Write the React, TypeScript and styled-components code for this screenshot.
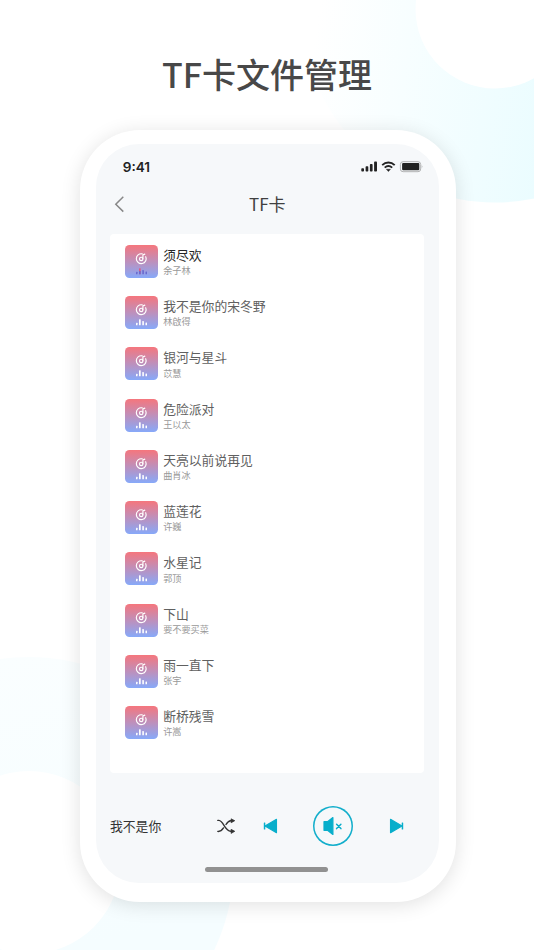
import React from "react";
import styled, { createGlobalStyle } from "styled-components";

const GlobalStyle = createGlobalStyle`
  * { box-sizing: border-box; }
  body {
    margin: 0;
    background: #fff;
    font-family: "Noto Sans CJK SC", sans-serif;
  }
`;

const Page = styled.main`
  position: relative;
  width: 534px;
  height: 950px;
  overflow: hidden;
  display: flex;
  flex-direction: column;
  align-items: center;
  background: #fff;
`;

const Backdrop = styled.svg`
  position: absolute;
  inset: 0;
  width: 534px;
  height: 950px;
`;

const Headline = styled.h1`
  position: relative;
  margin: 0;
  height: 129.5px;
  padding-top: 49px;
  font-size: 34px;
  line-height: 50px;
  font-weight: 500;
  color: #484848;
  white-space: nowrap;
`;

const Phone = styled.section`
  position: relative;
  width: 375.5px;
  height: 772.5px;
  margin-left: 1.5px;
  padding: 14.5px 17px 19px 16px;
  border-radius: 60px;
  background: #fff;
  box-shadow: 0 3px 20px rgba(0, 0, 0, 0.12);
`;

const Screen = styled.div`
  height: 739px;
  padding: 0 14px;
  border-radius: 43px;
  background: #f6f8fa;
  display: flex;
  flex-direction: column;
`;

const StatusBar = styled.div`
  height: 42px;
  padding: 3px 2px 0 12.7px;
  display: flex;
  align-items: center;
  justify-content: space-between;
`;

const Clock = styled.span`
  font: 600 13.6px/18px Inter, sans-serif;
  color: #222;
  transform: translateY(-0.5px);
`;

const NavBar = styled.header`
  height: 48px;
  padding: 0 3px 11.5px;
  display: grid;
  grid-template-columns: 14px 1fr 14px;
  align-items: center;
`;

const NavTitle = styled.h2`
  margin: 0;
  text-align: center;
  font-size: 17px;
  line-height: 24px;
  font-weight: 400;
  color: #404040;
`;

const SongList = styled.ul`
  list-style: none;
  margin: 0;
  width: 314px;
  height: 538.5px;
  padding: 10.8px 15px 0;
  border-radius: 4px;
  background: #fff;
`;

const SongRow = styled.li`
  height: 51.25px;
  display: flex;
  gap: 5.2px;
`;

const SongText = styled.div`
  display: flex;
  flex-direction: column;
`;

const SongTitle = styled.span<{ $active: boolean }>`
  font-size: 12.8px;
  line-height: 20.4px;
  color: ${(p) => (p.$active ? "#262626" : "#606060")};
`;

const Artist = styled.span`
  font-size: 9.15px;
  line-height: 11.6px;
  color: #989898;
`;

const Player = styled.footer`
  height: 107px;
  display: grid;
  grid-template-columns: 106px 46px 42px 85px 1fr;
  align-items: center;
`;

const NowPlaying = styled.span`
  padding-bottom: 1.5px;
  font-size: 12.8px;
  color: #333;
`;

const IconButton = styled.button`
  padding: 0;
  border: 0;
  background: none;
  display: flex;
  align-items: center;
  justify-content: flex-start;
`;

const MuteButton = styled(IconButton)`
  width: 40px;
  height: 40px;
  margin-left: 9px;
  justify-content: center;
  border-radius: 50%;
  box-shadow: inset 0 0 0 1.5px #12aecb;
`;

const HomeBar = styled.div`
  width: 122.5px;
  height: 5px;
  margin: -12.8px 0 0 95px;
  border-radius: 3px;
  background: #919191;
`;

const songs = [
  ["须尽欢", "余子林"],
  ["我不是你的宋冬野", "林啟得"],
  ["银河与星斗", "苡慧"],
  ["危险派对", "王以太"],
  ["天亮以前说再见", "曲肖冰"],
  ["蓝莲花", "许巍"],
  ["水星记", "郭顶"],
  ["下山", "要不要买菜"],
  ["雨一直下", "张宇"],
  ["断桥残雪", "许嵩"],
];

const BackdropRings = () => (
  <Backdrop viewBox="0 0 534 950" aria-hidden="true">
    <defs>
      <linearGradient id="ringTop" gradientUnits="userSpaceOnUse" x1="320" y1="0" x2="590" y2="40">
        <stop offset="0" stopColor="#fff" />
        <stop offset="1" stopColor="#e8fcff" />
      </linearGradient>
      <linearGradient id="ringBottom" gradientUnits="userSpaceOnUse" x1="0" y1="657" x2="60" y2="950">
        <stop offset="0" stopColor="#fafeff" />
        <stop offset="1" stopColor="#f5fdff" />
      </linearGradient>
    </defs>
    <circle cx="495" cy="9" r="193.5" fill="url(#ringTop)" />
    <circle cx="495" cy="9" r="79.5" fill="#fff" />
    <circle cx="29" cy="862" r="205" fill="url(#ringBottom)" />
    <circle cx="29" cy="862.5" r="91.5" fill="#fff" />
  </Backdrop>
);

const StatusIcons = () => (
  <svg width="62" height="12" viewBox="0 0 62 12">
    <g fill="#222">
      <rect x="0.3" y="7.2" width="2.7" height="3.3" rx="0.8" />
      <rect x="4.6" y="5.2" width="2.7" height="5.3" rx="0.8" />
      <rect x="8.9" y="3" width="2.7" height="7.5" rx="0.8" />
      <rect x="13.1" y="0.6" width="2.9" height="9.9" rx="0.8" />
      <path d="M25.3 8.2h4.2l-2.1 2.4z" stroke="#222" strokeWidth="0.4" strokeLinejoin="round" />
      <rect x="41.1" y="2.1" width="17.2" height="7.1" rx="1" />
    </g>
    <g fill="none" stroke="#222" strokeWidth="1.9">
      <path d="M21.2 4.1C24.8.6 30 .6 33.7 4.1" />
      <path d="M23.7 6.6C25.9 4.6 28.9 4.6 31.2 6.6" />
    </g>
    <rect x="39.4" y="0.7" width="20.3" height="10" rx="2.7" fill="none" stroke="#b2b3b4" />
    <path d="M60.8 4.1q1.2 1.6 0 3.2z" fill="#999" />
  </svg>
);

const CoverArt = ({ active }: { active: boolean }) => (
  <svg width="33" height="33" viewBox="0 0 33 33">
    <defs>
      <linearGradient id="cover" x1="0" y1="0" x2="0" y2="1">
        <stop offset="0" stopColor="#f5767d" />
        <stop offset="1" stopColor="#87a9f9" />
      </linearGradient>
    </defs>
    <rect width="33" height="33" rx="4.5" fill="url(#cover)" />
    <g fill="none" stroke="#fff" strokeWidth="1.15" strokeLinecap="round">
      <path d="M17.2 8.9A4.9 4.9 0 1 0 20.7 11.7" />
      <circle cx="16.2" cy="13.9" r="1.7" />
      <path d="M17.9 13.7V9.9L19.8 9.1" />
    </g>
    <g fill={active ? "#6869cf" : "#fff"}>
      <rect x="11" y="26.8" width="1.5" height="2.5" rx="0.4" />
      <rect x="14" y="23.3" width="1.7" height="6" rx="0.5" fill={active ? "#df5c83" : "#fff"} />
      {active && <rect x="14" y="26" width="1.7" height="3.3" rx="0.4" />}
      <rect x="17.3" y="25.1" width="1.6" height="4.2" rx="0.4" />
      <rect x="20.5" y="26.5" width="1.5" height="2.8" rx="0.4" />
    </g>
  </svg>
);

const BackIcon = () => (
  <svg width="14" height="18" viewBox="0 0 14 18">
    <path d="M10.3 1.8 2.8 9.2l7.5 7.4" fill="none" stroke="#888" strokeWidth="1.5" />
  </svg>
);

const ShuffleIcon = () => (
  <svg width="20" height="16" viewBox="0 0 20 16">
    <g fill="none" stroke="#333" strokeWidth="1.4" strokeLinecap="round">
      <path d="M1.8 2.4h1C8 2.8 8.2 13 14.8 13.3h2" />
      <path d="M1.8 13.4C4.3 13.7 6 12.2 7.5 9.9M10 6.5C11.2 4.4 12.6 2.9 14.8 2.7h2" />
    </g>
    <path d="M15.1.8 18.8 2.7 15.1 4.8zM15.1 11.3l3.7 2-3.7 2.1z" fill="#333" stroke="#333" strokeWidth="0.7" strokeLinejoin="round" />
  </svg>
);

const SkipIcon = ({ back = false }: { back?: boolean }) => (
  <svg width="16" height="16" viewBox="0 0 16 16">
    <g transform={back ? "translate(16 0) scale(-1 1)" : undefined} fill="#08aecb">
      <path d="M1.5 1.3 13 8 1.5 14.7z" stroke="#08aecb" strokeWidth="1.1" strokeLinejoin="round" />
      <rect x="12.7" y="4.6" width="1.5" height="6.9" rx="0.5" />
    </g>
  </svg>
);

const MuteIcon = () => (
  <svg width="20" height="20" viewBox="0 0 20 20">
    <path d="M1 5.7h3.5l5.4-4.1v16.8l-5.4-4.1H1z" fill="#08aecb" stroke="#08aecb" strokeWidth="1.2" strokeLinejoin="round" />
    <path d="m13.6 8.2 4.3 4.4m0-4.4-4.3 4.4" stroke="#08aecb" strokeWidth="1.5" strokeLinecap="round" />
  </svg>
);

export default function App() {
  return (
    <>
      <GlobalStyle />
      <Page>
        <BackdropRings />
        <Headline>TF卡文件管理</Headline>
        <Phone>
          <Screen>
            <StatusBar>
              <Clock>9:41</Clock>
              <StatusIcons />
            </StatusBar>
            <NavBar>
              <BackIcon />
              <NavTitle>TF卡</NavTitle>
            </NavBar>
            <SongList>
              {songs.map(([title, artist], i) => (
                <SongRow key={title}>
                  <CoverArt active={i === 0} />
                  <SongText>
                    <SongTitle $active={i === 0}>{title}</SongTitle>
                    <Artist>{artist}</Artist>
                  </SongText>
                </SongRow>
              ))}
            </SongList>
            <Player>
              <NowPlaying>我不是你</NowPlaying>
              <IconButton aria-label="随机播放"><ShuffleIcon /></IconButton>
              <IconButton aria-label="上一首"><SkipIcon back /></IconButton>
              <MuteButton aria-label="静音"><MuteIcon /></MuteButton>
              <IconButton aria-label="下一首"><SkipIcon /></IconButton>
            </Player>
            <HomeBar />
          </Screen>
        </Phone>
      </Page>
    </>
  );
}
